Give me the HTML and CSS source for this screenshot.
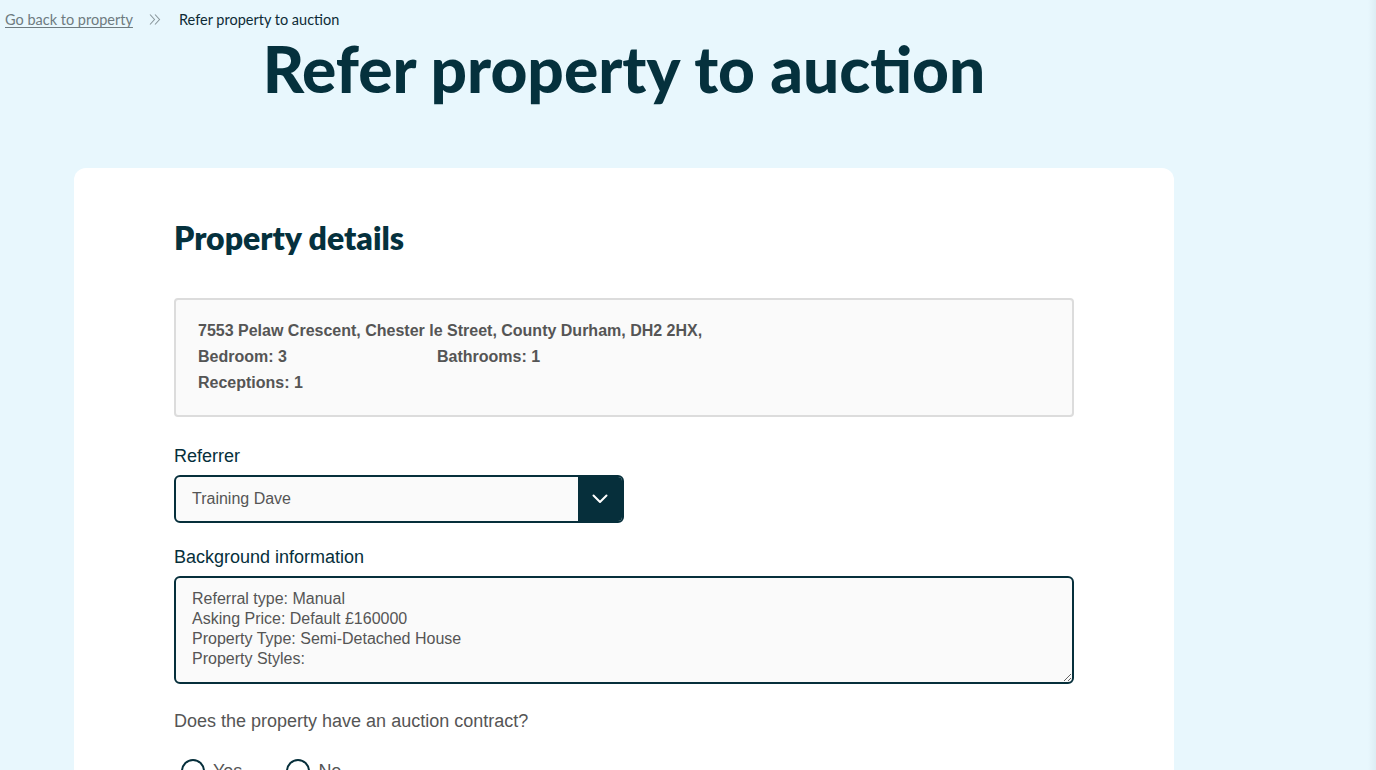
FILE: index.html
```html
<!DOCTYPE html>
<html lang="en">
<head>
<meta charset="utf-8">
<title>Refer property to auction</title>
<link rel="stylesheet" href="styles.css">
</head>
<body>
<div class="page">
  <nav class="breadcrumb">
    <a class="crumb-link" href="#">Go back to property</a>
    <span class="crumb-sep">
      <svg width="12" height="11" viewBox="0 0 12 11"><path d="M1 0.5 L5.5 5.5 L1 10.5 M6 0.5 L10.5 5.5 L6 10.5" fill="none" stroke="#8a979c" stroke-width="1.1"/></svg>
    </span>
    <span class="crumb-current">Refer property to auction</span>
  </nav>
  <main class="container">
    <h1 class="page-title">Refer property to auction</h1>
    <section class="card">
      <h2 class="card-title">Property details</h2>
      <div class="info-box">
        <div class="info-row">7553 Pelaw Crescent, Chester le Street, County Durham, DH2 2HX,</div>
        <div class="info-grid">
          <div>Bedroom: 3</div>
          <div>Bathrooms: 1</div>
          <div>Receptions: 1</div>
        </div>
      </div>
      <div class="field">
        <label class="field-label">Referrer</label>
        <div class="select">
          <span class="select-value">Training Dave</span>
          <span class="select-btn">
            <svg width="16" height="10" viewBox="0 0 16 10"><path d="M1.5 1.5 L8 8 L14.5 1.5" fill="none" stroke="#fff" stroke-width="2" stroke-linecap="round" stroke-linejoin="round"/></svg>
          </span>
        </div>
      </div>
      <div class="field">
        <label class="field-label">Background information</label>
        <textarea class="textarea">Referral type: Manual
Asking Price: Default £160000
Property Type: Semi-Detached House
Property Styles:</textarea>
      </div>
      <div class="question">Does the property have an auction contract?</div>
      <div class="radios">
        <label class="radio"><span class="radio-circle"></span>Yes</label>
        <label class="radio"><span class="radio-circle"></span>No</label>
      </div>
    </section>
  </main>
</div>
</body>
</html>
```
FILE: styles.css
```css
html, body {
  margin: 0;
  padding: 0;
}
body {
  background: #e8f7fd;
  font-family: "Liberation Sans", Arial, sans-serif;
  color: #062f3b;
  height: 770px;
  overflow: hidden;
}
.page {
  min-height: 770px;
  background: linear-gradient(to right, #e8f7fd 0, #e8f7fd calc(100% - 8px), #dcedf4 100%);
}
.breadcrumb {
  display: flex;
  align-items: center;
  padding: 11px 0 0 5px;
  font-family: Lato, "Noto Sans", sans-serif;
  font-size: 14.5px;
  line-height: 18px;
  height: 18px;
}
.crumb-link {
  color: #6e7b80;
  text-decoration: underline;
  text-underline-offset: 2px;
  text-decoration-thickness: 1px;
}
.crumb-sep {
  display: flex;
  align-items: center;
  margin: 0 18px 0 16px;
  position: relative;
  top: -1px;
}
.crumb-current {
  color: #0d2b36;
}
.container {
  width: 1100px;
  margin-left: 74px;
}
.page-title {
  margin: 0;
  text-align: center;
  font-family: Lato, "Noto Sans", sans-serif;
  font-weight: 900;
  font-size: 64px;
  line-height: 80px;
  color: #05313d;
}
.card {
  margin-top: 59px;
  background: #fff;
  border-radius: 12px;
  padding: 50px 100px 40px;
  min-height: 700px;
}
.card-title {
  margin: 0 0 40px;
  font-family: Lato, "Noto Sans", sans-serif;
  font-weight: 800;
  font-size: 32px;
  line-height: 40px;
  color: #05313d;
}
.info-box {
  border: 2px solid #dcdcdc;
  border-radius: 4px;
  background: #fafafa;
  padding: 18px 22px 19px;
  font-weight: bold;
  font-size: 16px;
  line-height: 26px;
  color: #555;
}
.info-grid {
  display: grid;
  grid-template-columns: 239px 239px;
}
.field {
  margin-top: 27px;
}
.field + .field {
  margin-top: 22px;
}
.field-label {
  display: block;
  font-size: 18px;
  line-height: 24px;
  color: #062f3b;
  margin-bottom: 7px;
}
.select {
  width: 450px;
  height: 48px;
  box-sizing: border-box;
  border: 2px solid #062f3b;
  border-radius: 6px;
  background: #fafafa;
  display: flex;
  align-items: center;
  overflow: hidden;
}
.select-value {
  flex: 1;
  padding-left: 16px;
  font-size: 16px;
  color: #555;
}
.select-btn {
  width: 44px;
  height: 100%;
  background: #062f3b;
  display: flex;
  align-items: center;
  justify-content: center;
}
.textarea {
  display: block;
  width: 900px;
  height: 108px;
  box-sizing: border-box;
  border: 2px solid #062f3b;
  border-radius: 6px;
  background: #fafafa;
  padding: 11px 16px;
  font-family: "Liberation Sans", Arial, sans-serif;
  font-size: 16px;
  line-height: 20px;
  color: #555;
  resize: vertical;
}
.question {
  margin-top: 25px;
  font-size: 18px;
  line-height: 24px;
  color: #555;
}
.radios {
  display: flex;
  gap: 44px;
  margin-top: 26px;
  padding-left: 7px;
}
.radio {
  display: flex;
  align-items: center;
  font-size: 18px;
  color: #555;
}
.radio-circle {
  width: 20px;
  height: 20px;
  border: 2px solid #062f3b;
  border-radius: 50%;
  margin-right: 8px;
}
```
